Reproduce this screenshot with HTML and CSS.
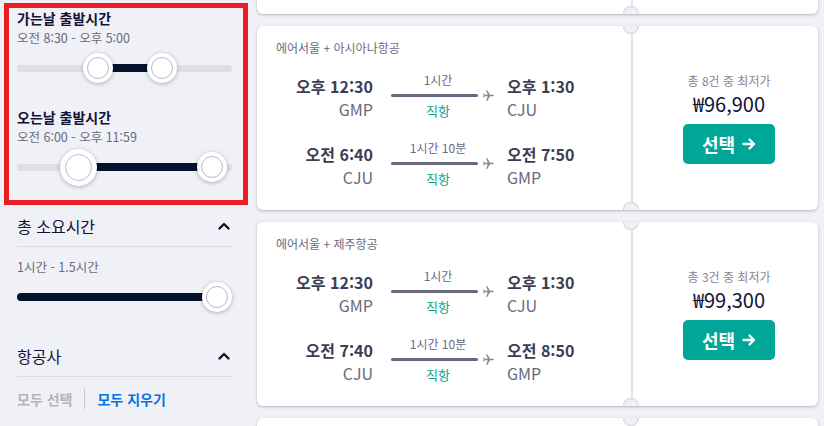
FILE: index.html
```html
<!DOCTYPE html>
<html lang="ko">
<head>
<meta charset="utf-8">
<title>항공권 검색 결과</title>
<link rel="stylesheet" href="styles.css">
</head>
<body>
<div class="page">
  <aside class="sidebar">
    <section class="times">
      <div class="filter">
        <h3 class="ftitle">가는날 출발시간</h3>
        <p class="fsub">오전 8:30 - 오후 5:00</p>
        <div class="slider">
          <div class="track"></div>
          <div class="fill" style="left:81px;width:64px"></div>
          <div class="thumb" style="left:81px"></div>
          <div class="thumb" style="left:145px"></div>
        </div>
      </div>
      <div class="filter next">
        <h3 class="ftitle">오는날 출발시간</h3>
        <p class="fsub">오전 6:00 - 오후 11:59</p>
        <div class="slider">
          <div class="track"></div>
          <div class="fill" style="left:61px;width:134px"></div>
          <div class="thumb big" style="left:61px"></div>
          <div class="thumb" style="left:195px"></div>
        </div>
      </div>
    </section>

    <section class="group">
      <div class="ghead">
        <span class="gtitle">총 소요시간</span>
        <svg class="chev" viewBox="0 0 12 8" width="12" height="8"><polyline points="1.5,6.5 6,2 10.5,6.5" fill="none" stroke="#111236" stroke-width="2.4" stroke-linecap="round" stroke-linejoin="round"/></svg>
      </div>
      <p class="fsub dur-range">1시간 - 1.5시간</p>
      <div class="slider">
        <div class="track"></div>
        <div class="fill start" style="left:0;width:200px"></div>
        <div class="thumb" style="left:200px"></div>
      </div>
    </section>

    <section class="group airlines">
      <div class="ghead">
        <span class="gtitle">항공사</span>
        <svg class="chev" viewBox="0 0 12 8" width="12" height="8"><polyline points="1.5,6.5 6,2 10.5,6.5" fill="none" stroke="#111236" stroke-width="2.4" stroke-linecap="round" stroke-linejoin="round"/></svg>
      </div>
      <div class="links">
        <span class="muted">모두 선택</span>
        <span class="sep"></span>
        <span class="link">모두 지우기</span>
      </div>
    </section>
  </aside>

  <main class="results">
    <article class="card">
      <div class="legs"></div>
      <div class="offer"></div>
    </article>

    <article class="card">
      <div class="legs">
        <p class="carrier">에어서울 + 아시아나항공</p>
        <div class="leg">
          <div class="dep"><div class="time">오후 12:30</div><div class="code">GMP</div></div>
          <div class="mid"><div class="dur">1시간</div><div class="route"><span class="line"></span><svg class="plane" viewBox="0 0 24 24"><path d="M22 12c0-.8-.7-1.3-1.5-1.3H15L9.5 2H7.6l2.9 8.7H5.2L3.3 8.3H1.8l1.4 3.7-1.4 3.7h1.5l1.9-2.4h5.3L7.6 22h1.9l5.5-8.7h5.5c.8 0 1.5-.5 1.5-1.3z"/></svg></div><div class="direct">직항</div></div>
          <div class="arr"><div class="time">오후 1:30</div><div class="code">CJU</div></div>
        </div>
        <div class="leg second">
          <div class="dep"><div class="time">오전 6:40</div><div class="code">CJU</div></div>
          <div class="mid"><div class="dur">1시간 10분</div><div class="route"><span class="line"></span><svg class="plane" viewBox="0 0 24 24"><path d="M22 12c0-.8-.7-1.3-1.5-1.3H15L9.5 2H7.6l2.9 8.7H5.2L3.3 8.3H1.8l1.4 3.7-1.4 3.7h1.5l1.9-2.4h5.3L7.6 22h1.9l5.5-8.7h5.5c.8 0 1.5-.5 1.5-1.3z"/></svg></div><div class="direct">직항</div></div>
          <div class="arr"><div class="time">오전 7:50</div><div class="code">GMP</div></div>
        </div>
      </div>
      <div class="offer">
        <p class="from">총 8건 중 최저가</p>
        <p class="price">₩96,900</p>
        <button class="select">선택 <svg viewBox="0 0 14 14" width="14" height="14"><path d="M1.5 7h10.5M7.5 2.5 12 7l-4.5 4.5" fill="none" stroke="#fff" stroke-width="2.3" stroke-linecap="round" stroke-linejoin="round"/></svg></button>
      </div>
    </article>

    <article class="card">
      <div class="legs">
        <p class="carrier">에어서울 + 제주항공</p>
        <div class="leg">
          <div class="dep"><div class="time">오후 12:30</div><div class="code">GMP</div></div>
          <div class="mid"><div class="dur">1시간</div><div class="route"><span class="line"></span><svg class="plane" viewBox="0 0 24 24"><path d="M22 12c0-.8-.7-1.3-1.5-1.3H15L9.5 2H7.6l2.9 8.7H5.2L3.3 8.3H1.8l1.4 3.7-1.4 3.7h1.5l1.9-2.4h5.3L7.6 22h1.9l5.5-8.7h5.5c.8 0 1.5-.5 1.5-1.3z"/></svg></div><div class="direct">직항</div></div>
          <div class="arr"><div class="time">오후 1:30</div><div class="code">CJU</div></div>
        </div>
        <div class="leg second">
          <div class="dep"><div class="time">오전 7:40</div><div class="code">CJU</div></div>
          <div class="mid"><div class="dur">1시간 10분</div><div class="route"><span class="line"></span><svg class="plane" viewBox="0 0 24 24"><path d="M22 12c0-.8-.7-1.3-1.5-1.3H15L9.5 2H7.6l2.9 8.7H5.2L3.3 8.3H1.8l1.4 3.7-1.4 3.7h1.5l1.9-2.4h5.3L7.6 22h1.9l5.5-8.7h5.5c.8 0 1.5-.5 1.5-1.3z"/></svg></div><div class="direct">직항</div></div>
          <div class="arr"><div class="time">오전 8:50</div><div class="code">GMP</div></div>
        </div>
      </div>
      <div class="offer">
        <p class="from">총 3건 중 최저가</p>
        <p class="price">₩99,300</p>
        <button class="select">선택 <svg viewBox="0 0 14 14" width="14" height="14"><path d="M1.5 7h10.5M7.5 2.5 12 7l-4.5 4.5" fill="none" stroke="#fff" stroke-width="2.3" stroke-linecap="round" stroke-linejoin="round"/></svg></button>
      </div>
    </article>

    <article class="card">
      <div class="legs"></div>
      <div class="offer"></div>
    </article>
  </main>
</div>
</body>
</html>
```

FILE: styles.css
```css
* { box-sizing: border-box; }

body {
  margin: 0;
  background: #eff1f6;
  font-family: "Noto Sans CJK KR", "Noto Sans", sans-serif;
  color: #111236;
  overflow: hidden;
}

p { margin: 0; }

.page {
  display: flex;
  align-items: flex-start;
}

/* ---------- sidebar ---------- */
.sidebar {
  flex: none;
  width: 248px;
  padding-left: 4px;
}

.times {
  margin-top: 3px;
  height: 202px;
  border: 5px solid #ec1c24;
  padding: 0 11px 0 8px;
}

.ftitle {
  margin: 0;
  font-size: 14px;
  font-weight: 700;
  line-height: 20px;
  color: #111236;
}

.fsub {
  margin-top: 2px;
  font-size: 12.5px;
  line-height: 16px;
  color: #68697f;
}

.filter.next { margin-top: 24px; }

.slider {
  position: relative;
  height: 30px;
  margin-top: 7px;
}

.track {
  position: absolute;
  left: 0;
  right: 0;
  top: 50%;
  height: 7px;
  margin-top: -3.5px;
  border-radius: 4px;
  background: #dddee6;
}

.fill {
  position: absolute;
  top: 50%;
  height: 8px;
  margin-top: -4px;
  background: #05142e;
}

.fill.start { border-radius: 4px 0 0 4px; }

.thumb {
  position: absolute;
  top: 50%;
  width: 30px;
  height: 30px;
  margin: -15px 0 0 -15px;
  border-radius: 50%;
  background: #fff;
  box-shadow: 0 1px 4px rgba(0, 0, 0, 0.28);
}

.thumb::after {
  content: "";
  position: absolute;
  inset: 4px;
  border-radius: 50%;
  border: 1px solid #b9bac6;
}

.thumb.big {
  width: 37px;
  height: 37px;
  margin: -18.5px 0 0 -18.5px;
}

.thumb.big::after { inset: 5px; }

.group {
  padding: 0 16px 0 13px;
}

.ghead {
  display: flex;
  align-items: center;
  justify-content: space-between;
  height: 41px;
  margin-top: 1px;
  border-bottom: 1px solid #dcdde4;
}

.gtitle {
  font-size: 16px;
  line-height: 22px;
  color: #111236;
}

.chev { margin-right: 2px; }

.dur-range { margin-top: 12px; }

.airlines .ghead { margin-top: 24px; }

.links {
  display: flex;
  align-items: center;
  margin-top: 12px;
  font-size: 14px;
  font-weight: 700;
  line-height: 20px;
}

.muted { color: #b3b4c0; }
.link { color: #0770e3; }

.sep {
  width: 1px;
  height: 20px;
  margin: 0 12px;
  background: #c6c7d0;
}

/* ---------- results ---------- */
.results {
  flex: none;
  width: 561px;
  margin-left: 9px;
  margin-top: -170px;
  display: flex;
  flex-direction: column;
  gap: 12px;
}

.card {
  position: relative;
  display: flex;
  height: 184px;
  background: #fff;
  border-radius: 6px;
  overflow: hidden;
  box-shadow: 0 1px 3px rgba(37, 32, 31, 0.28);
}

.card::before,
.card::after {
  content: "";
  position: absolute;
  left: 366px;
  width: 16px;
  height: 16px;
  border-radius: 50%;
  background: #eff1f6;
  box-shadow: inset 0 0 2px rgba(37, 32, 31, 0.35);
}

.card::before { top: -8px; }
.card::after { bottom: -8px; }

.legs {
  flex: none;
  width: 374px;
  padding: 14px 0 0 19px;
}

.carrier {
  font-size: 12px;
  line-height: 16px;
  color: #68697f;
}

.leg {
  display: flex;
  align-items: flex-start;
  height: 44px;
  margin-top: 19px;
}

.leg.second { margin-top: 24px; }

.dep {
  width: 97px;
  text-align: right;
}

.time {
  font-size: 16px;
  font-weight: 700;
  line-height: 22px;
  color: #3d3e54;
}

.code {
  margin-top: 1px;
  font-size: 16px;
  line-height: 22px;
  color: #68697f;
}

.mid {
  width: 94px;
  margin-left: 18px;
  margin-top: -3px;
  text-align: center;
}

.dur {
  font-size: 12px;
  line-height: 16px;
  color: #68697f;
}

.route {
  display: flex;
  align-items: center;
  width: 104px;
  height: 14px;
}

.line {
  width: 87px;
  height: 3px;
  border-radius: 2px;
  background: #68697f;
}

.plane {
  width: 13px;
  height: 13px;
  margin-left: 4px;
  fill: #8a8b9c;
}

.direct {
  font-size: 13px;
  line-height: 18px;
  color: #00a698;
}

.arr { margin-left: 22px; }

.offer {
  flex: 1;
  border-left: 2px solid #e3e4ea;
  padding-left: 7px;
  display: flex;
  flex-direction: column;
  align-items: center;
  justify-content: center;
}

.from {
  font-size: 12px;
  line-height: 16px;
  color: #858698;
}

.price {
  margin-top: 3px;
  font-size: 20px;
  line-height: 24px;
  color: #111236;
}

.select {
  margin-top: 8px;
  width: 92px;
  height: 40px;
  border: 0;
  border-radius: 5px;
  background: #00a698;
  color: #fff;
  font-family: inherit;
  font-size: 18px;
  font-weight: 700;
  display: flex;
  align-items: center;
  justify-content: center;
  gap: 7px;
  padding: 0;
}
```
